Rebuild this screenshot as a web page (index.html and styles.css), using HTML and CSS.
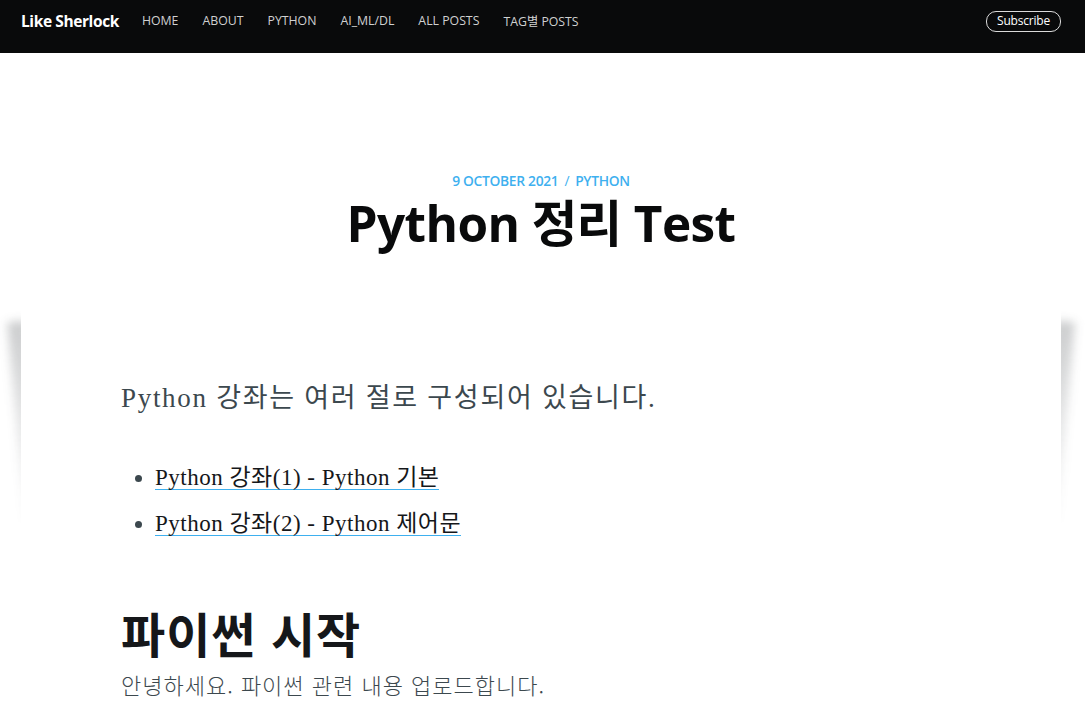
FILE: index.html
```html
<!DOCTYPE html>
<html lang="ko">
<head>
<meta charset="utf-8">
<title>Python 정리 Test</title>
<link rel="stylesheet" href="styles.css">
</head>
<body>
<header class="site-header">
  <nav class="site-nav">
    <div class="nav-left">
      <a class="site-title" href="#">Like Sherlock</a>
      <ul class="nav">
        <li><a href="#">Home</a></li>
        <li><a href="#">About</a></li>
        <li><a href="#">Python</a></li>
        <li><a href="#">AI_ML/DL</a></li>
        <li><a href="#">All Posts</a></li>
        <li><a href="#">Tag별 Posts</a></li>
      </ul>
    </div>
    <a class="subscribe" href="#">Subscribe</a>
  </nav>
</header>
<main class="site-main">
  <article class="post-full">
    <header class="post-full-header">
      <div class="post-meta">
        <time>9 October 2021</time>
        <span class="divider">/</span>
        <a href="#">Python</a>
      </div>
      <h1 class="post-title">Python 정리 Test</h1>
    </header>
    <section class="post-content">
      <p class="lead">Python 강좌는 여러 절로 구성되어 있습니다.</p>
      <ul class="links">
        <li><a href="#">Python 강좌(1) - Python 기본</a></li>
        <li><a href="#">Python 강좌(2) - Python 제어문</a></li>
      </ul>
      <h1 class="content-h1">파이썬 시작</h1>
      <p class="body-text">안녕하세요. 파이썬 관련 내용 업로드합니다.</p>
    </section>
  </article>
</main>
</body>
</html>
```

FILE: styles.css
```css
* { box-sizing: border-box; }
html { background: #fff; }
html, body { margin: 0; padding: 0; }
body {
  font-family: "Open Sans", "Noto Sans CJK KR", sans-serif;
  color: #3c484e;
  overflow: hidden;
}
a { text-decoration: none; color: inherit; }

.site-header {
  background: #090a0b;
  height: 53px;
  padding: 0 24px 0 21px;
}
.site-nav {
  height: 42px;
  display: flex;
  align-items: center;
  justify-content: space-between;
}
.nav-left { display: flex; align-items: center; }
.site-title {
  color: #fff;
  font-weight: 700;
  font-size: 15.5px;
  letter-spacing: -0.4px;
  margin-right: 11px;
}
.nav {
  list-style: none;
  margin: 0;
  padding: 0;
  display: flex;
}
.nav a {
  display: block;
  padding: 0 12px;
  color: rgba(255,255,255,0.82);
  font-size: 12.3px;
  text-transform: uppercase;
}
.subscribe {
  color: #fff;
  font-size: 12px;
  border: 1px solid rgba(255,255,255,0.85);
  border-radius: 10px;
  padding: 1px 10px 2px;
  line-height: 16px;
  letter-spacing: -0.2px;
}

.site-main { padding-right: 3px; }
.post-full-header {
  padding: 117px 0 0;
  text-align: center;
}
.post-meta {
  display: flex;
  justify-content: center;
  align-items: center;
  color: #3eb0ef;
  font-size: 13.8px;
  font-weight: 600;
  text-transform: uppercase;
  line-height: 22px;
  letter-spacing: -0.3px;
}
.divider { margin: 0 6px; font-weight: 400; }
.post-title {
  margin: 0;
  font-size: 49.5px;
  font-weight: 700;
  line-height: 63px;
  color: #090a0b;
  letter-spacing: -0.6px;
}

.post-content {
  position: relative;
  max-width: 1040px;
  margin: 51px auto 0;
  padding: 72px 100px 0;
  min-height: 230px;
  background: #fff;
  font-family: "Liberation Serif", "Noto Sans CJK KR", serif;
}
.post-content::before,
.post-content::after {
  content: "";
  position: absolute;
  top: 15px;
  z-index: -1;
  width: 20px;
  height: 200px;
  background: linear-gradient(rgba(39,44,49,0.24), rgba(39,44,49,0.12) 50%, rgba(39,44,49,0.03));
  filter: blur(5px);
}
.post-content::before { left: -5px; transform: rotate(-5deg); }
.post-content::after { right: -5px; transform: rotate(5deg); }

.lead {
  margin: 0 0 37px;
  font-size: 27px;
  line-height: 40px;
  letter-spacing: 1.7px;
  color: #3c484e;
}
.links {
  margin: 0 0 55px;
  padding-left: 34px;
  font-size: 23px;
  line-height: 46px;
  letter-spacing: 0.5px;
  color: #3c484e;
}
.links a {
  color: #15171a;
  box-shadow: inset 0 -1px 0 #3eb0ef;
}
.content-h1 {
  margin: 0;
  font-family: "Noto Sans CJK KR", sans-serif;
  font-size: 48px;
  line-height: 60px;
  font-weight: 700;
  letter-spacing: 1px;
  color: #15171a;
}
.body-text {
  margin: 2px 0 0;
  font-family: "Noto Sans CJK KR", sans-serif;
  font-weight: 300;
  font-size: 22px;
  line-height: 40px;
  letter-spacing: 1px;
  color: #3c484e;
}
```
